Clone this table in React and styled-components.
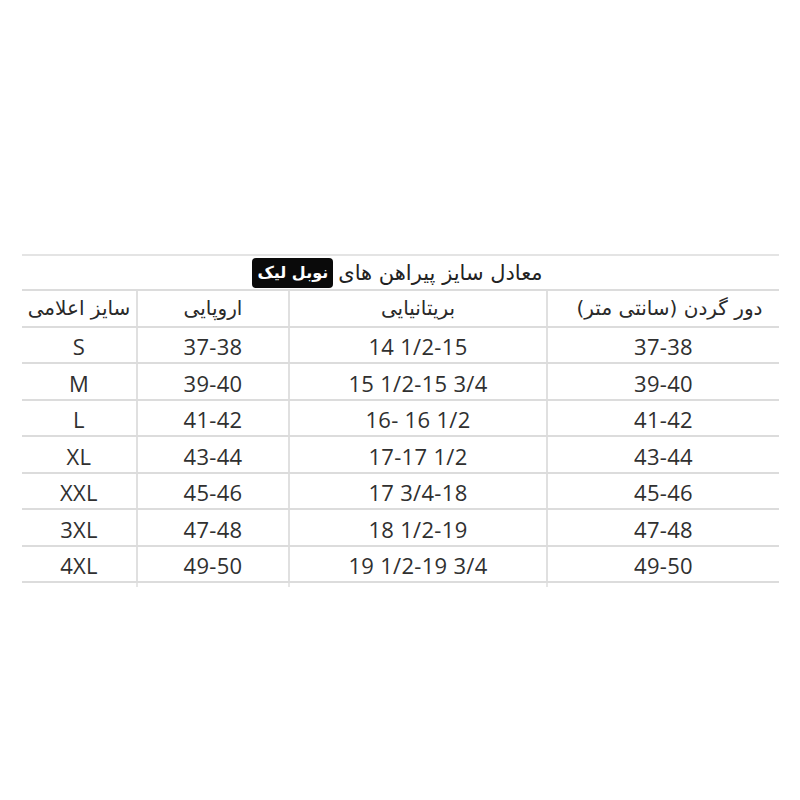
import React from 'react'
import styled, { createGlobalStyle } from 'styled-components'

const GlobalStyle = createGlobalStyle`
  html, body {
    margin: 0;
    padding: 0;
    background: #ffffff;
  }
`

const rows = [
  ['S', '37-38', '14 1/2-15', '37-38'],
  ['M', '39-40', '15 1/2-15 3/4', '39-40'],
  ['L', '41-42', '16- 16 1/2', '41-42'],
  ['XL', '43-44', '17-17 1/2', '43-44'],
  ['XXL', '45-46', '17 3/4-18', '45-46'],
  ['3XL', '47-48', '18 1/2-19', '47-48'],
  ['4XL', '49-50', '19 1/2-19 3/4', '49-50'],
]

const headers = ['سایز اعلامی', 'اروپایی', 'بریتانیایی', 'دور گردن  (سانتی متر)']

const App = () => {
  return (
    <Page>
      <GlobalStyle />
      <Chart>
        <TitleRow>
          <Title dir="rtl">
            معادل سایز پیراهن های <Brand>نوبل لیک</Brand>
          </Title>
        </TitleRow>
        <Row>
          {headers.map((h, i) => (
            <HeadCell key={i} dir="rtl" last={i === 3} shift={i === 3}>{h}</HeadCell>
          ))}
        </Row>
        {rows.map((r, i) => (
          <Row key={i}>
            {r.map((v, j) => (
              <Cell key={j} last={j === 3}>{v}</Cell>
            ))}
          </Row>
        ))}
        <Tail>
          <TailCell />
          <TailCell />
          <TailCell />
          <TailCell last />
        </Tail>
      </Chart>
    </Page>
  )
}

export default App

//CSS IN JS
const Page = styled.div`
  width: 800px;
  height: 800px;
  box-sizing: border-box;
  padding: 254px 21px 0 22px;
  background: #fff;
`

const Chart = styled.div`
  width: 757px;
  display: flex;
  flex-direction: column;
`

const TitleRow = styled.div`
  height: 37px;
  box-sizing: border-box;
  border-top: 2px solid #e4e4e4;
  border-bottom: 2px solid #dcdcdc;
  display: flex;
  align-items: center;
  justify-content: center;
`

const Title = styled.div`
  font-family: "DejaVu Sans", sans-serif;
  font-size: 21px;
  color: #222;
  display: flex;
  align-items: center;
  gap: 5px;
  padding-right: 6px;
`

const Brand = styled.span`
  background: #0a0a0a;
  color: #fff;
  font-weight: 700;
  border-radius: 4px;
  padding: 2px 5px 3px;
  font-size: 16px;
  line-height: 25px;
`

const Row = styled.div`
  display: grid;
  grid-template-columns: 116px 152px 258px 231px;
  height: 36.5px;
  box-sizing: border-box;
  border-bottom: 2px solid #dcdcdc;
`

const Cell = styled.div`
  display: flex;
  align-items: center;
  justify-content: center;
  padding-top: 3px;
  border-right: ${p => (p.last ? 'none' : '2px solid #e0e0e0')};
  font-family: "Open Sans", sans-serif;
  font-size: 22px;
  color: #303030;
  letter-spacing: 0.3px;
`

const HeadCell = styled(Cell)`
  font-family: "DejaVu Sans", sans-serif;
  font-size: 20px;
  padding-top: 0;
  padding-left: ${p => (p.shift ? '12px' : '0')};
  color: #2a2a2a;
  letter-spacing: 0;
`

const Tail = styled.div`
  display: grid;
  grid-template-columns: 116px 152px 258px 231px;
  height: 4px;
`

const TailCell = styled.div`
  border-right: ${p => (p.last ? 'none' : '2px solid #e6e6e6')};
`
